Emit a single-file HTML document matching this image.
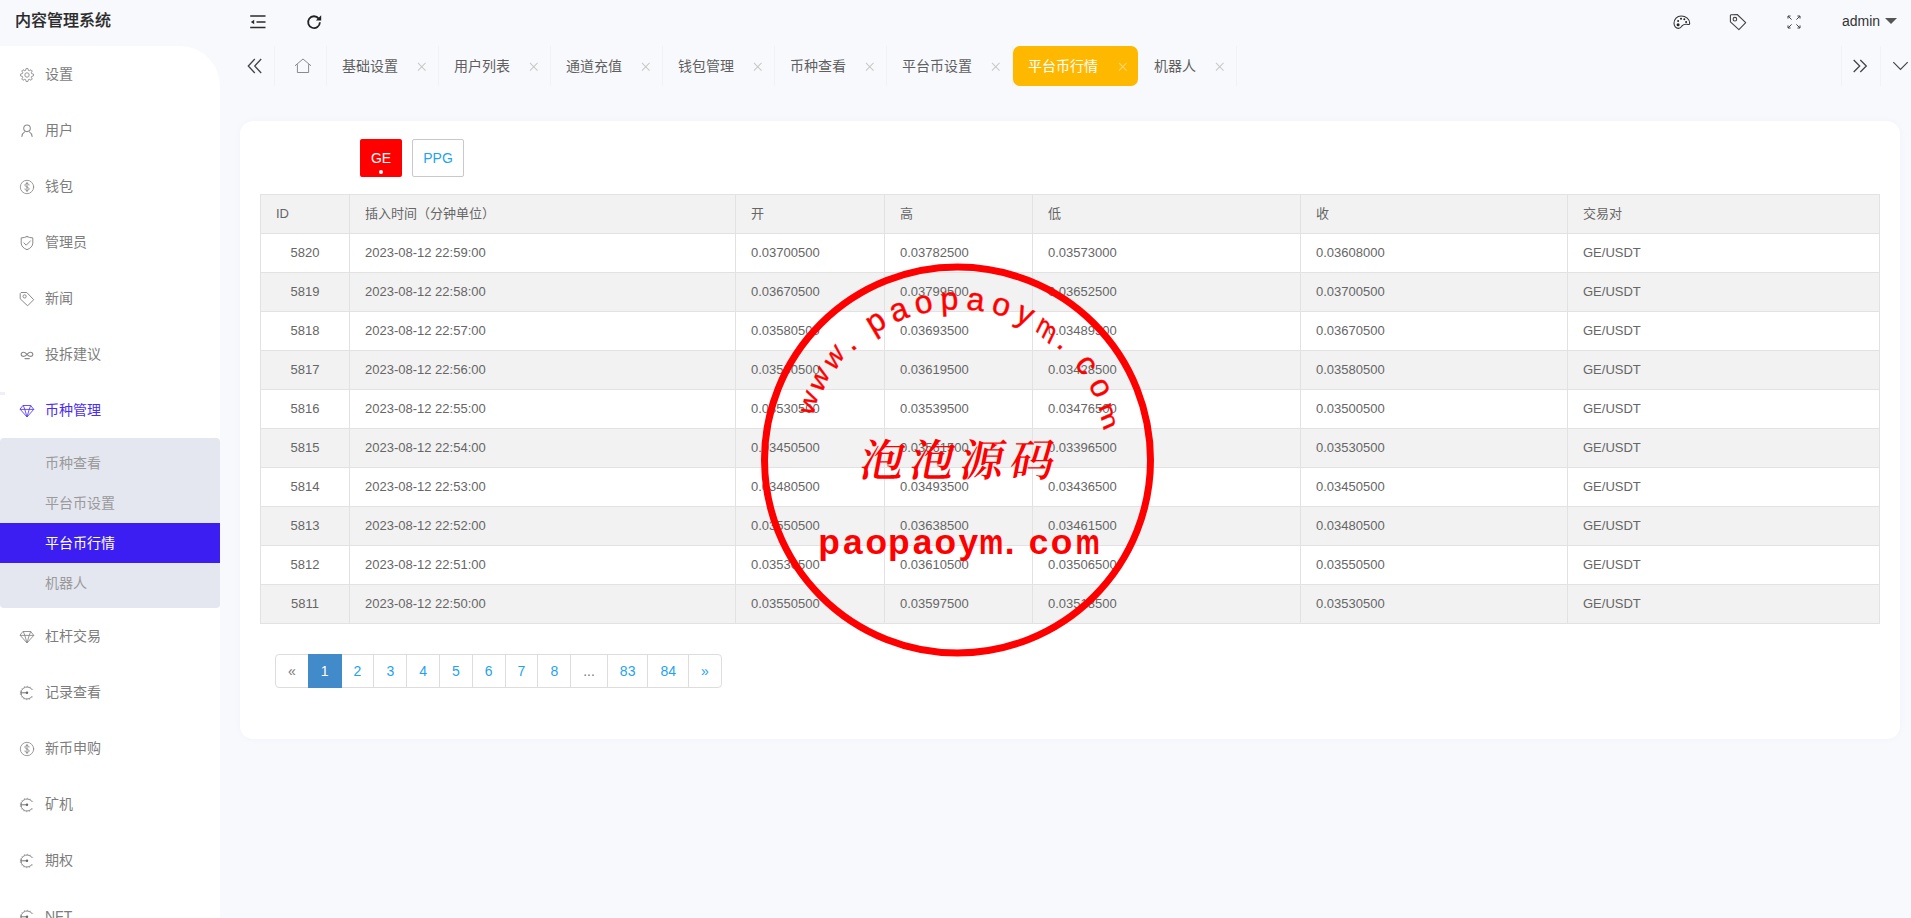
<!DOCTYPE html>
<html lang="zh-CN">
<head>
<meta charset="utf-8">
<title>内容管理系统</title>
<style>
*{box-sizing:border-box;margin:0;padding:0}
html,body{width:1911px;height:918px;overflow:hidden}
body{background:#f8f9fd;font-family:"Liberation Sans","Noto Sans CJK SC",sans-serif;font-size:14px;color:#666;position:relative}
.abs{position:absolute}
.logo{position:absolute;left:15px;top:0;height:42px;line-height:42px;font-size:16px;font-weight:500;color:#2a2a2a;-webkit-text-stroke:.18px #2a2a2a}
.side{position:absolute;left:0;top:46px;width:220px;height:872px;background:#fff;border-top-right-radius:40px;overflow:hidden}
.mi{position:absolute;left:0;width:220px;height:56px;line-height:56px;color:#7d7d7d;font-size:14px}
.mi .ic{position:absolute;left:19px;top:20.7px;width:16px;height:16px;color:#8a8a8a}
.mi span{position:absolute;left:45px;top:0}
.mi.on{color:#4a2cf5}
.mi.on .ic{color:#5a3df6}
.sub{position:absolute;left:0;top:438px;width:220px;height:170px;background:#e4e6f0;border-radius:4px}
.si{position:absolute;left:0;width:220px;height:40px;line-height:40px;color:#9a9a9a;font-size:14px}
.si span{position:absolute;left:45px}
.si.act{background:#3c1ef2;color:#fff}
.hic{position:absolute;color:#333}
.tabs .sep{position:absolute;top:46px;width:1px;height:40px;background:#f1f2f6}
.tab{position:absolute;top:46px;height:40px;line-height:40px;color:#5f5f5f;font-size:14px;border-right:1px solid #f1f2f6}
.tab .tt{position:absolute;left:15px;top:0;white-space:nowrap}
.tab .tx{position:absolute;right:11.500px;top:15.500px;width:9.500px;height:9.500px;stroke:#c8c8c8;stroke-width:1.1;fill:none}
.tab.cur{background:#ffb800;color:#fff;border-radius:7px;border-right:none;width:125px!important}
.tab.cur .tx{right:10.500px}
.tab.cur .tx{stroke:#ffd772}
.card{position:absolute;left:240px;top:121px;width:1660px;height:618px;background:#fff;border-radius:13px;box-shadow:0 0 6px rgba(120,130,170,.06)}
.btn{position:absolute;top:139px;height:38px;line-height:38px;font-size:14px;border-radius:2px;text-align:center}
.b1{left:360px;width:42px;background:#ff0000;color:#fff}
.b1 i{position:absolute;left:19px;top:31px;width:4px;height:4px;border-radius:50%;background:#fff}
.b2{left:412px;width:52px;background:#fff;border:1px solid #c9c9c9;color:#1da4ec;line-height:36px}
.tb{position:absolute;left:260px;top:194px;width:1619px;border-collapse:collapse;table-layout:fixed;font-size:13px;color:#666}
.tb th,.tb td{border:1px solid #e2e2e2;height:39px;padding:0 15px;text-align:left;font-weight:normal;line-height:20px;white-space:nowrap}
.tb th{background:#f2f2f2}
.tb tbody tr:nth-child(even) td{background:#f2f2f2}
.tb td.c{text-align:center}
.pg{position:absolute;left:275px;top:654px;list-style:none;display:flex;font-size:14px}
.pg li{margin-left:-1px;border:1px solid #ddd;background:#fff;color:#1fa2f0;height:34px;line-height:32px;padding:0 12px}
.pg li:first-child{margin-left:0;border-radius:4px 0 0 4px}
.pg li:last-child{border-radius:0 4px 4px 0}
.pg li.dis{color:#777}
.pg li.act{background:#428bca;border-color:#428bca;color:#fff;position:relative;z-index:2}
.stamp{position:absolute;overflow:visible}
.stamp text{fill:#f00}
.s1{stroke:#f00;stroke-width:.4px}
.s1{font-family:"Liberation Sans",sans-serif;font-size:32px}
.s2{font-family:"Noto Serif CJK SC","Noto Sans CJK SC",serif;font-size:44px;font-weight:600}
.s3{font-family:"Liberation Sans",sans-serif;font-size:35.3px;font-weight:bold}
</style>
</head>
<body>
<div class="logo">内容管理系统</div>
<div class="side">
<div style="position:absolute;left:0;top:-46px;width:220px;height:918px">
<div class="mi" style="top:46px"><svg class="ic" viewBox="0 0 16 16"><g fill="none" stroke="currentColor" stroke-width=".9" stroke-linejoin="round"><path d="M6.58 3.41 L7.14 1.46 L8.86 1.46 L9.42 3.41 L10.24 3.75 L12.02 2.77 L13.23 3.98 L12.25 5.76 L12.59 6.58 L14.54 7.14 L14.54 8.86 L12.59 9.42 L12.25 10.24 L13.23 12.02 L12.02 13.23 L10.24 12.25 L9.42 12.59 L8.86 14.54 L7.14 14.54 L6.58 12.59 L5.76 12.25 L3.98 13.23 L2.77 12.02 L3.75 10.24 L3.41 9.42 L1.46 8.86 L1.46 7.14 L3.41 6.58 L3.75 5.76 L2.77 3.98 L3.98 2.77 L5.76 3.75Z"/><circle cx="8" cy="8" r="2.2"/></g></svg><span>设置</span></div>
<div class="mi" style="top:102px"><svg class="ic" viewBox="0 0 16 16"><g fill="none" stroke="currentColor" stroke-width="1.05" stroke-linecap="round"><circle cx="8" cy="5.3" r="3.3"/><path d="M2.900 13.500c.2-2.100 1.200-3.700 2.700-4.600M10.400 8.900c1.500.9 2.500 2.500 2.700 4.600"/></g></svg><span>用户</span></div>
<div class="mi" style="top:158px"><svg class="ic" viewBox="0 0 16 16"><g fill="none" stroke="currentColor" stroke-linecap="round"><circle cx="8" cy="8" r="6.700" stroke-width=".85"/><path d="M10 6.100C10 5.100 9.200 4.500 8 4.500S6 5.100 6 6.100C6 7.100 6.800 7.500 8 8s2 .9 2 1.900c0 1-.8 1.600-2 1.600s-2-.6-2-1.600M8 3.300v9.400" stroke-width=".95"/></g></svg><span>钱包</span></div>
<div class="mi" style="top:214px"><svg class="ic" viewBox="0 0 16 16"><g fill="none" stroke="currentColor" stroke-width="1" stroke-linecap="round" stroke-linejoin="round"><path d="M8 1.600c1.800.8 3.700 1.200 5.800 1.300v5.200c0 3-2.300 5.200-5.800 6.600-3.500-1.400-5.800-3.600-5.800-6.600V2.900C4.300 2.800 6.200 2.400 8 1.600z"/><path d="M4.900 7.900l2.300 2.300 4.200-4.300"/></g></svg><span>管理员</span></div>
<div class="mi" style="top:270px"><svg class="ic" viewBox="0 0 16 16"><g fill="none" stroke="currentColor" stroke-width="1" stroke-linejoin="round"><path d="M2.100 1.500h5.700l6.900 7.200-6.100 6.100-7.400-7V2.600z"/><circle cx="5.600" cy="5.400" r="1.600"/></g></svg><span>新闻</span></div>
<div class="mi" style="top:326px"><svg class="ic" viewBox="0 0 16 16"><g fill="none" stroke="currentColor" stroke-width="1.1" stroke-linecap="round"><path d="M8 7.300C6.700 5.900 5.700 5.200 4.500 5.200 3.100 5.200 2.200 6.100 2.200 7.300s.9 2.100 2.300 2.100c1.200 0 2.200-.7 3.500-2.100s2.300-2.100 3.500-2.100c1.400 0 2.300.9 2.300 2.100s-.9 2.100-2.300 2.100C10.300 9.400 9.300 8.700 8 7.300z"/><path d="M6 11.600h4.300"/></g></svg><span>投拆建议</span></div>
<div class="mi on" style="top:382px"><svg class="ic" viewBox="0 0 16 16"><g fill="none" stroke="currentColor" stroke-width=".9" stroke-linejoin="round" stroke-linecap="round"><path d="M4.300 2.500h7.400l3 3.900L8 14 1.300 6.400z"/><path d="M1.300 6.400h13.400M4.300 2.500l1.500 3.900L8 14l2.200-7.600 1.500-3.900"/></g></svg><span>币种管理</span></div>
<div class="mi" style="top:608px"><svg class="ic" viewBox="0 0 16 16"><g fill="none" stroke="currentColor" stroke-width=".9" stroke-linejoin="round" stroke-linecap="round"><path d="M4.300 2.500h7.400l3 3.900L8 14 1.300 6.400z"/><path d="M1.300 6.400h13.400M4.300 2.500l1.500 3.900L8 14l2.200-7.600 1.500-3.900"/></g></svg><span>杠杆交易</span></div>
<div class="mi" style="top:664px"><svg class="ic" viewBox="0 0 16 16"><g fill="none" stroke="currentColor" stroke-linecap="butt"><path d="M13.200 4.900A6 6 0 1 0 13.200 11.100" stroke-width="1"/><path d="M13.700 4.500A6.700 6.700 0 1 0 13.700 11.500" stroke-width="1" stroke-dasharray=".9 2.050"/><path d="M1.200 7.800h6.300" stroke-width="1" stroke="#777"/></g><circle cx="8" cy="7.800" r="1.250" fill="#666"/></svg><span>记录查看</span></div>
<div class="mi" style="top:720px"><svg class="ic" viewBox="0 0 16 16"><g fill="none" stroke="currentColor" stroke-linecap="round"><circle cx="8" cy="8" r="6.700" stroke-width=".85"/><path d="M10 6.100C10 5.100 9.200 4.500 8 4.500S6 5.100 6 6.100C6 7.100 6.800 7.500 8 8s2 .9 2 1.900c0 1-.8 1.600-2 1.600s-2-.6-2-1.600M8 3.300v9.400" stroke-width=".95"/></g></svg><span>新币申购</span></div>
<div class="mi" style="top:776px"><svg class="ic" viewBox="0 0 16 16"><g fill="none" stroke="currentColor" stroke-linecap="butt"><path d="M13.200 4.900A6 6 0 1 0 13.200 11.100" stroke-width="1"/><path d="M13.700 4.500A6.700 6.700 0 1 0 13.700 11.500" stroke-width="1" stroke-dasharray=".9 2.050"/><path d="M1.200 7.800h6.300" stroke-width="1" stroke="#777"/></g><circle cx="8" cy="7.800" r="1.250" fill="#666"/></svg><span>矿机</span></div>
<div class="mi" style="top:832px"><svg class="ic" viewBox="0 0 16 16"><g fill="none" stroke="currentColor" stroke-linecap="butt"><path d="M13.200 4.900A6 6 0 1 0 13.200 11.100" stroke-width="1"/><path d="M13.700 4.500A6.700 6.700 0 1 0 13.700 11.500" stroke-width="1" stroke-dasharray=".9 2.050"/><path d="M1.200 7.800h6.300" stroke-width="1" stroke="#777"/></g><circle cx="8" cy="7.800" r="1.250" fill="#666"/></svg><span>期权</span></div>
<div class="mi" style="top:888px"><svg class="ic" viewBox="0 0 16 16"><g fill="none" stroke="currentColor" stroke-linecap="butt"><path d="M13.200 4.900A6 6 0 1 0 13.200 11.100" stroke-width="1"/><path d="M13.700 4.500A6.700 6.700 0 1 0 13.700 11.500" stroke-width="1" stroke-dasharray=".9 2.050"/><path d="M1.200 7.800h6.300" stroke-width="1" stroke="#777"/></g><circle cx="8" cy="7.800" r="1.250" fill="#666"/></svg><span>NFT</span></div>
<div class="sub"></div>
<div class="si" style="top:443px"><span>币种查看</span></div>
<div class="si" style="top:483px"><span>平台币设置</span></div>
<div class="si act" style="top:523px"><span>平台币行情</span></div>
<div class="si" style="top:563px"><span>机器人</span></div>
</div>
</div>

<!-- header left icons -->
<svg class="hic" style="left:249px;top:14px" width="18" height="16" viewBox="0 0 18 16"><g stroke="#2b2b2b" stroke-width="1.5" fill="none"><path d="M1.200 2h15.300M7.500 8h9M1.200 13.600h15.300"/></g><path d="M5.200 5.700v4.600L1.800 8z" fill="#2b2b2b"/></svg>
<svg class="hic" style="left:305px;top:13px" width="18" height="18" viewBox="0 0 18 18"><path d="M13.700 5.600A5.900 5.900 0 1 0 14.900 9.300" fill="none" stroke="#222" stroke-width="1.800"/><path d="M16.200 2.300v5.300h-5.300z" fill="#222"/></svg>
<!-- header right icons -->
<svg class="hic" style="left:1672px;top:14px" width="20" height="16" viewBox="0 0 20 16"><path d="M9.200 2C5 2 2 5 2 9.200c0 3 1.900 5.200 4.400 5.200 2.200 0 2.800-1.500 3.900-2.700 1.200-1.300 2.700-1.700 4.600-1.400 1.700.3 2.800.4 2.800-1.100C17.700 5.200 14 2 9.200 2z" fill="none" stroke="#333" stroke-width="1.100"/><circle cx="6.100" cy="10.800" r="1.500" fill="#222"/><circle cx="6.100" cy="7.100" r="1" fill="#222"/><circle cx="9" cy="4.800" r="1" fill="#222"/><circle cx="12.300" cy="5.200" r="1" fill="#222"/><circle cx="14.100" cy="8" r="1" fill="#222"/></svg>
<svg class="hic" style="left:1728px;top:12px" width="20" height="20" viewBox="0 0 20 20"><g fill="none" stroke="#444" stroke-width="1.100" stroke-linejoin="round"><path d="M3.100 2.700l6.100-.2 8.500 8.200-6.800 6.900-8.500-7.800V3.400z"/><circle cx="6.900" cy="7.200" r="1.800"/></g></svg>
<svg class="hic" style="left:1786px;top:14px" width="16" height="16" viewBox="0 0 16 16"><g fill="none" stroke="#444" stroke-width="1"><path d="M2 4.600V2h2.600M2 2l3.600 3.600M11.400 2H14v2.600M14 2l-3.600 3.600M2 11.400V14h2.600M2 14l3.600-3.600M14 11.400V14h-2.600M14 14l-3.600-3.600"/></g></svg>
<div class="abs" style="left:1842px;top:0;height:42px;line-height:42px;font-size:14px;color:#333">admin</div>
<svg class="hic" style="left:1885px;top:18px" width="12" height="6" viewBox="0 0 12 6"><path d="M0 0h12L6 6z" fill="#555"/></svg>

<!-- tabs -->
<div class="tabs">
<svg class="hic" style="left:246px;top:58px" width="18" height="16" viewBox="0 0 18 16"><path d="M8.800 1L2.300 8l6.500 7M15.200 1L8.700 8l6.500 7" fill="none" stroke="#444" stroke-width="1.300"/></svg>
<div class="sep" style="left:274px"></div>
<svg class="hic" style="left:294px;top:57px" width="18" height="17" viewBox="0 0 18 17"><path d="M1 8.800L9 2l8 6.800M3.400 7.200v8.300h11.200V7.200" fill="none" stroke="#8a8a8a" stroke-width="1"/></svg>
<div class="sep" style="left:326px"></div>
<div class="tab" style="left:327px;width:112px"><span class="tt">基础设置</span><svg class="tx" viewBox="0 0 10 10"><path d="M1 1l8 8M9 1l-8 8"/></svg></div>
<div class="tab" style="left:439px;width:112px"><span class="tt">用户列表</span><svg class="tx" viewBox="0 0 10 10"><path d="M1 1l8 8M9 1l-8 8"/></svg></div>
<div class="tab" style="left:551px;width:112px"><span class="tt">通道充值</span><svg class="tx" viewBox="0 0 10 10"><path d="M1 1l8 8M9 1l-8 8"/></svg></div>
<div class="tab" style="left:663px;width:112px"><span class="tt">钱包管理</span><svg class="tx" viewBox="0 0 10 10"><path d="M1 1l8 8M9 1l-8 8"/></svg></div>
<div class="tab" style="left:775px;width:112px"><span class="tt">币种查看</span><svg class="tx" viewBox="0 0 10 10"><path d="M1 1l8 8M9 1l-8 8"/></svg></div>
<div class="tab" style="left:887px;width:126px"><span class="tt">平台币设置</span><svg class="tx" viewBox="0 0 10 10"><path d="M1 1l8 8M9 1l-8 8"/></svg></div>
<div class="tab cur" style="left:1013px;width:126px"><span class="tt">平台币行情</span><svg class="tx" viewBox="0 0 10 10"><path d="M1 1l8 8M9 1l-8 8"/></svg></div>
<div class="tab" style="left:1139px;width:98px"><span class="tt">机器人</span><svg class="tx" viewBox="0 0 10 10"><path d="M1 1l8 8M9 1l-8 8"/></svg></div>
<div class="sep" style="left:1841px"></div>
<svg class="hic" style="left:1852px;top:59px" width="17" height="14" viewBox="0 0 17 14"><path d="M1.700 1l6 6-6 6M8.300 1l6 6-6 6" fill="none" stroke="#444" stroke-width="1.300"/></svg>
<div class="sep" style="left:1880px"></div>
<svg class="hic" style="left:1892px;top:61px" width="17" height="10" viewBox="0 0 17 10"><path d="M1.300 1.200l7.200 7.300 7.200-7.300" fill="none" stroke="#444" stroke-width="1.200"/></svg>
</div>

<div class="abs" style="left:0;top:392px;width:5px;height:3px;background:#efeffb"></div>
<div class="card"></div>
<div class="btn b1">GE<i></i></div>
<div class="btn b2">PPG</div>
<table class="tb"><colgroup><col style="width:89px"><col style="width:386px"><col style="width:149px"><col style="width:148px"><col style="width:268px"><col style="width:267px"><col style="width:312px"></colgroup>
<thead><tr><th>ID</th><th>插入时间（分钟单位）</th><th>开</th><th>高</th><th>低</th><th>收</th><th>交易对</th></tr></thead><tbody>
<tr><td class="c">5820</td><td>2023-08-12 22:59:00</td><td>0.03700500</td><td>0.03782500</td><td>0.03573000</td><td>0.03608000</td><td>GE/USDT</td></tr>
<tr><td class="c">5819</td><td>2023-08-12 22:58:00</td><td>0.03670500</td><td>0.03799500</td><td>0.03652500</td><td>0.03700500</td><td>GE/USDT</td></tr>
<tr><td class="c">5818</td><td>2023-08-12 22:57:00</td><td>0.03580500</td><td>0.03693500</td><td>0.03489500</td><td>0.03670500</td><td>GE/USDT</td></tr>
<tr><td class="c">5817</td><td>2023-08-12 22:56:00</td><td>0.03500500</td><td>0.03619500</td><td>0.03428500</td><td>0.03580500</td><td>GE/USDT</td></tr>
<tr><td class="c">5816</td><td>2023-08-12 22:55:00</td><td>0.03530500</td><td>0.03539500</td><td>0.03476500</td><td>0.03500500</td><td>GE/USDT</td></tr>
<tr><td class="c">5815</td><td>2023-08-12 22:54:00</td><td>0.03450500</td><td>0.03561500</td><td>0.03396500</td><td>0.03530500</td><td>GE/USDT</td></tr>
<tr><td class="c">5814</td><td>2023-08-12 22:53:00</td><td>0.03480500</td><td>0.03493500</td><td>0.03436500</td><td>0.03450500</td><td>GE/USDT</td></tr>
<tr><td class="c">5813</td><td>2023-08-12 22:52:00</td><td>0.03550500</td><td>0.03638500</td><td>0.03461500</td><td>0.03480500</td><td>GE/USDT</td></tr>
<tr><td class="c">5812</td><td>2023-08-12 22:51:00</td><td>0.03530500</td><td>0.03610500</td><td>0.03506500</td><td>0.03550500</td><td>GE/USDT</td></tr>
<tr><td class="c">5811</td><td>2023-08-12 22:50:00</td><td>0.03550500</td><td>0.03597500</td><td>0.03518500</td><td>0.03530500</td><td>GE/USDT</td></tr>
</tbody></table>
<ul class="pg"><li class="dis"><span>«</span></li><li class="act"><span>1</span></li><li class=""><span>2</span></li><li class=""><span>3</span></li><li class=""><span>4</span></li><li class=""><span>5</span></li><li class=""><span>6</span></li><li class=""><span>7</span></li><li class=""><span>8</span></li><li class="dis"><span>...</span></li><li class=""><span>83</span></li><li class=""><span>84</span></li><li class=""><span>»</span></li></ul>
<svg class="stamp" style="left:740px;top:240px" width="440" height="440" viewBox="0 0 440 440">
<title>www.paopaoym.com 泡泡源码 paopaoym. com</title>
<circle cx="217.5" cy="220.0" r="193" fill="none" stroke="#f00" stroke-width="7"/>
<text class="s1"><tspan x="72.8" y="177.1" rotate="-70.2" textLength="17.3" lengthAdjust="spacingAndGlyphs">w</tspan><tspan x="81.7" y="154.0" rotate="-60.8" textLength="17.3" lengthAdjust="spacingAndGlyphs">w</tspan><tspan x="94.5" y="132.5" rotate="-51.3" textLength="17.3" lengthAdjust="spacingAndGlyphs">w</tspan><tspan x="112.0" y="112.3" rotate="-42.7">.</tspan><tspan x="133.1" y="94.8" rotate="-30.6">p</tspan><tspan x="154.0" y="83.0" rotate="-21.5">a</tspan><tspan x="176.7" y="74.7" rotate="-12.3">o</tspan><tspan x="201.0" y="69.9" rotate="-2.9">p</tspan><tspan x="225.7" y="69.3" rotate="6.5">a</tspan><tspan x="250.2" y="72.6" rotate="15.9">o</tspan><tspan x="273.7" y="79.9" rotate="24.9">y</tspan><tspan x="294.7" y="90.2" rotate="34.4" textLength="19.2" lengthAdjust="spacingAndGlyphs">m</tspan><tspan x="315.6" y="105.5" rotate="42.3">.</tspan><tspan x="333.9" y="123.9" rotate="53.5">c</tspan><tspan x="348.0" y="144.1" rotate="63.2">o</tspan><tspan x="358.6" y="166.3" rotate="72.8" textLength="19.2" lengthAdjust="spacingAndGlyphs">m</tspan></text>
<text class="s2" transform="translate(118.0 236.0) skewX(-11)" x="0" y="0" textLength="194" lengthAdjust="spacing">泡泡源码</text>
<text class="s3" y="314.1"><tspan x="78.2" textLength="21.57" lengthAdjust="spacingAndGlyphs">p</tspan><tspan x="102.9" textLength="19.63" lengthAdjust="spacingAndGlyphs">a</tspan><tspan x="125.4" textLength="21.57" lengthAdjust="spacingAndGlyphs">o</tspan><tspan x="148.0" textLength="21.57" lengthAdjust="spacingAndGlyphs">p</tspan><tspan x="172.7" textLength="19.63" lengthAdjust="spacingAndGlyphs">a</tspan><tspan x="194.5" textLength="21.57" lengthAdjust="spacingAndGlyphs">o</tspan><tspan x="218.4" textLength="19.63" lengthAdjust="spacingAndGlyphs">y</tspan><tspan x="238.9" textLength="24.32" lengthAdjust="spacingAndGlyphs">m</tspan><tspan x="264.8" textLength="9.81" lengthAdjust="spacingAndGlyphs">.</tspan><tspan x="278.3"> </tspan><tspan x="288.7" textLength="19.63" lengthAdjust="spacingAndGlyphs">c</tspan><tspan x="310.7" textLength="21.57" lengthAdjust="spacingAndGlyphs">o</tspan><tspan x="335.5" textLength="24.32" lengthAdjust="spacingAndGlyphs">m</tspan></text>
</svg>
</body>
</html>
